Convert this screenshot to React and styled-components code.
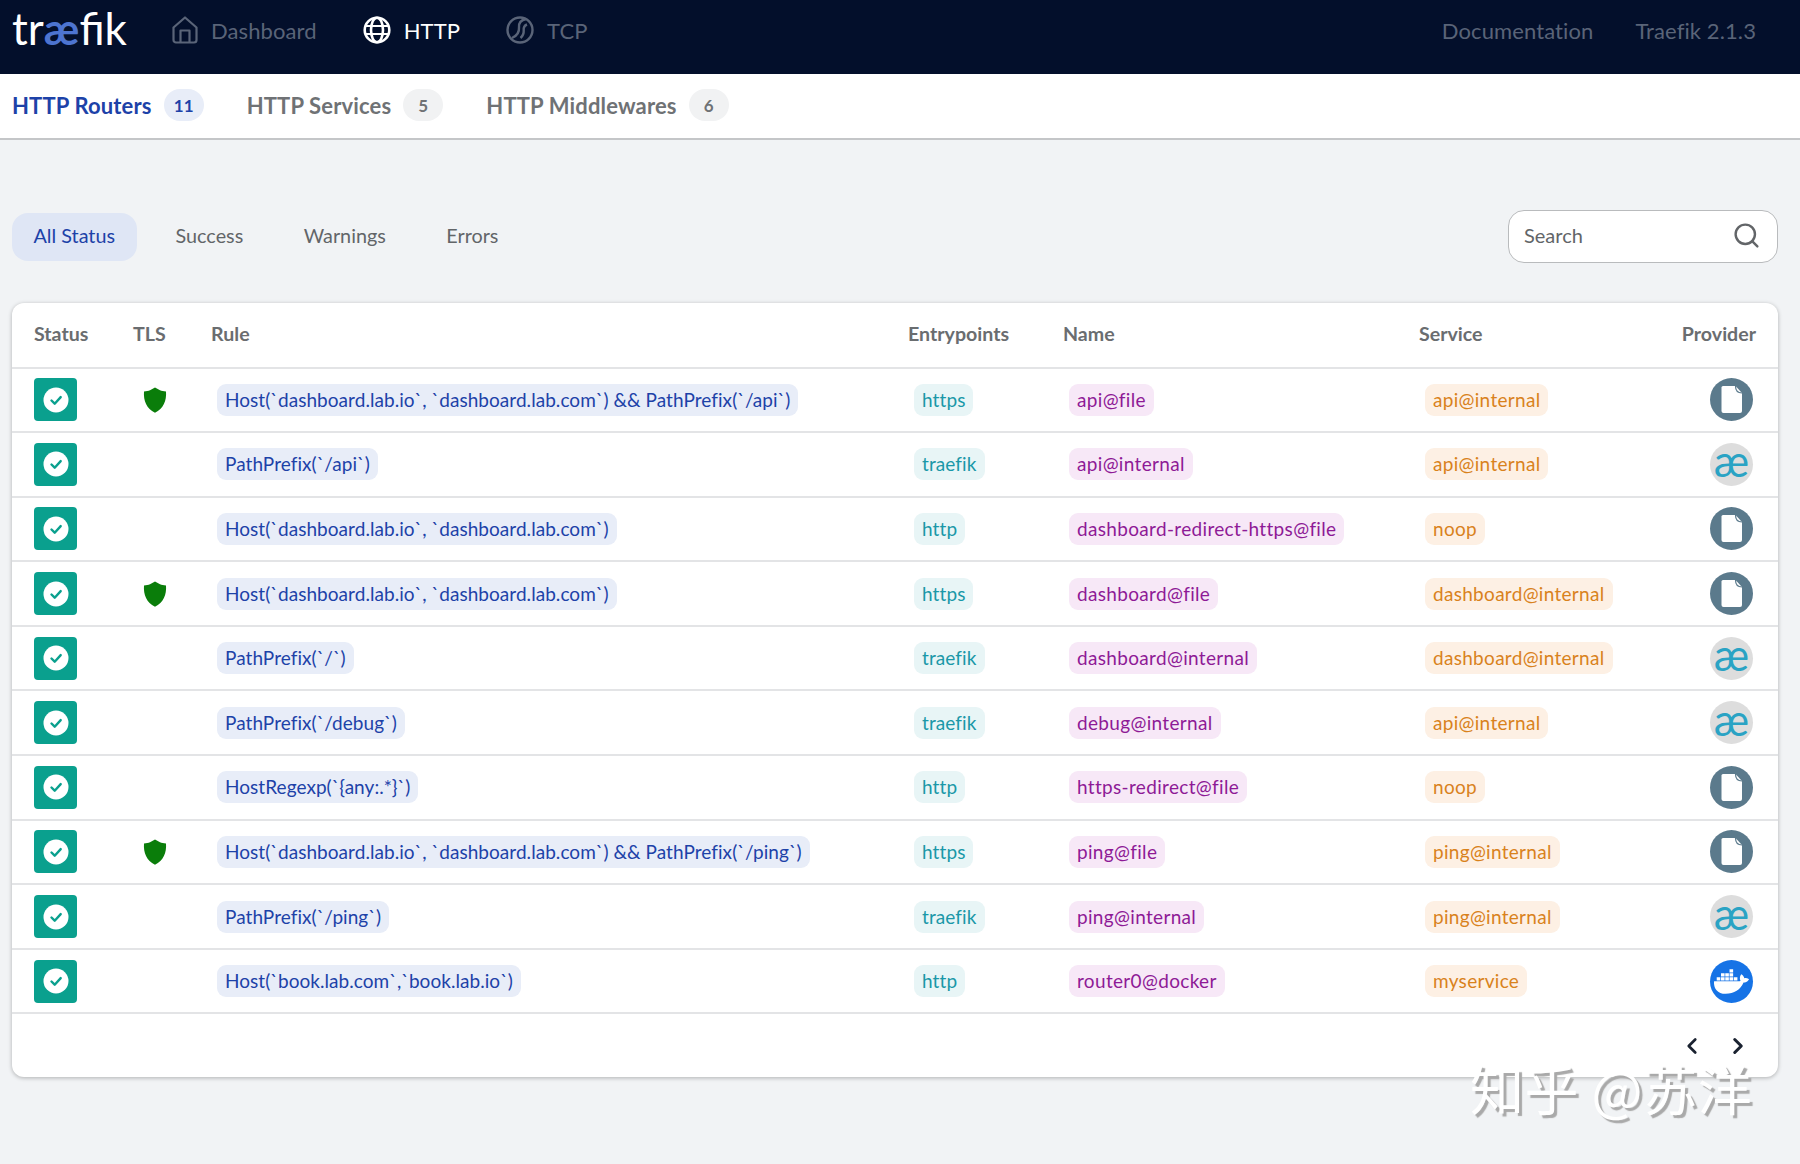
import React from 'react'
import styled, { createGlobalStyle } from 'styled-components'
import { ChevronLeft, ChevronRight, Search } from 'lucide-react'
import { FaDocker } from 'react-icons/fa'

const GlobalStyle = createGlobalStyle`
  html, body {
    margin: 0;
    padding: 0;
    background: #f1f3f5;
    font-family: Lato, "Open Sans", "Liberation Sans", sans-serif;
  }
`;

const Page = styled.div`
  position: relative;
  width: 1800px;
  height: 1164px;
  overflow: hidden;
`;

const TopBar = styled.header`
  height: 74px;
  background: #030f2b;
  display: flex;
  align-items: flex-start;
  padding: 8px 44px 0 12px;
  box-sizing: border-box;
`;

const Logo = styled.div`
  width: 114px;
  margin-right: 46px;
  margin-top: -2px;
  font-size: 44px;
  line-height: 44px;
  font-weight: 400;
  color: #fff;
  white-space: nowrap;
  span { color: #4d74d0; font-weight: 700; }
`;

const NavItem = styled.div`
  display: flex;
  align-items: center;
  gap: 13px;
  height: 44px;
  font-size: 22px;
  letter-spacing: 0.1px;
  margin-right: ${p => p.$gap || 0}px;
  color: ${p => (p.$active ? '#ffffff' : '#5a6478')};
`;

const NavSpacer = styled.div`
  flex: 1;
`;

const SubTabs = styled.nav`
  height: 66px;
  background: #fff;
  border-bottom: 2px solid #c4c6c8;
  box-sizing: border-box;
  display: flex;
  align-items: center;
  padding: 0 0 2px 12px;
`;

const SubTab = styled.div`
  display: flex;
  align-items: center;
  gap: 12px;
  font-size: 22px;
  font-weight: 700;
  letter-spacing: 0.15px;
  margin-right: 43px;
  color: ${p => (p.$active ? '#1d42a8' : '#6f7275')};
`;

const Count = styled.span`
  min-width: 40px;
  height: 32px;
  border-radius: 16px;
  font-size: 17px;
  font-weight: 700;
  display: flex;
  align-items: center;
  justify-content: center;
  background: ${p => (p.$active ? '#e8edf8' : '#f1f2f3')};
  color: ${p => (p.$active ? '#1d42a8' : '#6f7275')};
`;

const Toolbar = styled.div`
  display: flex;
  align-items: center;
  justify-content: space-between;
  margin: 70px 22px 0 12px;
  height: 53px;
`;

const Filters = styled.div`
  display: flex;
  align-items: center;
  gap: 17.5px;
`;

const Filter = styled.div`
  height: 48px;
  padding: 0 21.5px 4px;
  box-sizing: border-box;
  border-radius: 16px;
  display: flex;
  align-items: center;
  font-size: 19.8px;
  color: ${p => (p.$active ? '#1d42a8' : '#626568')};
  background: ${p => (p.$active ? '#dfe6f5' : 'transparent')};
`;

const SearchBox = styled.div`
  width: 270px;
  height: 53px;
  box-sizing: border-box;
  padding: 0 16px 3px 15px;
  border: 1.5px solid #b9bbbd;
  border-radius: 16px;
  background: #fff;
  display: flex;
  align-items: center;
  justify-content: space-between;
  font-size: 20px;
  color: #626568;
`;

const Card = styled.section`
  margin: 40px 22px 0 12px;
  background: #fff;
  border-radius: 12px;
  box-shadow: 0 1px 4px rgba(0, 0, 0, 0.28);
`;

const Row = styled.div`
  display: grid;
  grid-template-columns: 99px 78px 697px 155px 356px 1fr 100px;
  align-items: center;
  height: ${p => (p.$head ? 65.5 : 64.6)}px;
  box-sizing: border-box;
  padding: 0 22px ${p => (p.$head ? 2 : 0)}px 22px;
  border-bottom: 2px solid #e3e4e6;
`;

const HeadCell = styled.div`
  font-size: 19.6px;
  font-weight: 700;
  color: #6a6d70;
  text-align: ${p => (p.$right ? 'right' : 'left')};
`;

const StatusBox = styled.div`
  width: 43px;
  height: 43px;
  border-radius: 4px;
  background: #0aa08e;
  display: flex;
  align-items: center;
  justify-content: center;
`;

const TlsCell = styled.div`
  padding-left: 10px;
  height: 26px;
`;

const ChipCell = styled.div`
  padding-left: 6px;
`;

const Chip = styled.span`
  display: inline-block;
  height: 32px;
  line-height: 32px;
  padding: 0 8px;
  border-radius: 9px;
  font-size: 19px;
  white-space: nowrap;
  letter-spacing: ${p => p.$ls}px;
  background: ${p => p.$bg};
  color: ${p => p.$fg};
`;

const ProviderCell = styled.div`
  display: flex;
  justify-content: flex-end;
  padding-right: 3px;
`;

const ProviderBadge = styled.div`
  width: 43px;
  height: 43px;
  border-radius: 50%;
  display: flex;
  align-items: center;
  justify-content: center;
  background: ${p => p.$bg};
`;

const AeGlyph = styled.span`
  font-size: 44px;
  line-height: 44px;
  margin-top: -8px;
  color: #2aa3c4;
`;

const Pager = styled.div`
  height: 63px;
  display: flex;
  align-items: center;
  justify-content: flex-end;
  gap: 20px;
  padding-right: 27px;
  color: #1a2230;
`;

const Watermark = styled.div`
  position: absolute;
  left: 1470px;
  top: 1050px;
  font-family: "Noto Sans CJK SC", sans-serif;
  font-size: 54px;
  line-height: 76px;
  letter-spacing: 0.5px;
  color: #fff;
  white-space: nowrap;
  text-shadow: 3px 3px 1px #a9a9a9;
`;

const rows = [
  { tls: true, rule: 'Host(`dashboard.lab.io`, `dashboard.lab.com`) && PathPrefix(`/api`)', entry: 'https', name: 'api@file', service: 'api@internal', provider: 'file' },
  { rule: 'PathPrefix(`/api`)', entry: 'traefik', name: 'api@internal', service: 'api@internal', provider: 'internal' },
  { rule: 'Host(`dashboard.lab.io`, `dashboard.lab.com`)', entry: 'http', name: 'dashboard-redirect-https@file', service: 'noop', provider: 'file' },
  { tls: true, rule: 'Host(`dashboard.lab.io`, `dashboard.lab.com`)', entry: 'https', name: 'dashboard@file', service: 'dashboard@internal', provider: 'file' },
  { rule: 'PathPrefix(`/`)', entry: 'traefik', name: 'dashboard@internal', service: 'dashboard@internal', provider: 'internal' },
  { rule: 'PathPrefix(`/debug`)', entry: 'traefik', name: 'debug@internal', service: 'api@internal', provider: 'internal' },
  { rule: 'HostRegexp(`{any:.*}`)', entry: 'http', name: 'https-redirect@file', service: 'noop', provider: 'file' },
  { tls: true, rule: 'Host(`dashboard.lab.io`, `dashboard.lab.com`) && PathPrefix(`/ping`)', entry: 'https', name: 'ping@file', service: 'ping@internal', provider: 'file' },
  { rule: 'PathPrefix(`/ping`)', entry: 'traefik', name: 'ping@internal', service: 'ping@internal', provider: 'internal' },
  { rule: 'Host(`book.lab.com`,`book.lab.io`)', entry: 'http', name: 'router0@docker', service: 'myservice', provider: 'docker' },
]

const chipStyles = {
  rule: ['#e8edf8', '#1d42a8', 0.05],
  entry: ['#e8f5f6', '#1a98a8', 0.1],
  name: ['#f7e8f7', '#8e1a96', 0.33],
  service: ['#fdf0e4', '#d9821c', 0.3],
}

const HomeIcon = () => (
  <svg width="26" height="28" viewBox="0 0 26 28" fill="none" stroke="#5a6478" strokeWidth="2.2" strokeLinejoin="round">
    <path d="M13 1.500L24.500 11.500V24a2.500 2.500 0 0 1-2.500 2.500H4A2.500 2.500 0 0 1 1.500 24V11.500z" />
    <path d="M8.500 26V14.500h9V26" />
  </svg>
)

const GlobeIcon = () => (
  <svg width="28" height="28" viewBox="0 0 28 28" fill="none" stroke="#fff" strokeWidth="2.6">
    <circle cx="14" cy="14" r="12.300" />
    <ellipse cx="14" cy="14" rx="6" ry="12.300" />
    <path d="M2.500 10h23M2.500 18h23" strokeWidth="2.200" />
  </svg>
)

const TcpIcon = () => (
  <svg width="28" height="28" viewBox="0 0 28 28" fill="none" stroke="#5a6478" strokeWidth="2.400">
    <circle cx="14" cy="14" r="12.500" />
    <path d="M20 3c-5 1-7.500 3.500-7 8.500.4 4.500-1.500 8-7 10.500" />
    <path d="M21 8.500c-2.800 1-3.600 3-3.300 6 .2 3-.9 5.500-3.200 7.500" />
  </svg>
)

const CheckIcon = () => (
  <svg width="26" height="26" viewBox="0 0 26 26">
    <circle cx="13" cy="13" r="12.500" fill="#fff" />
    <path d="M8.500 13.500l3.200 3.200 6-6.600" fill="none" stroke="#0aa08e" strokeWidth="2.400" strokeLinecap="round" strokeLinejoin="round" />
  </svg>
)

const ShieldIcon = () => (
  <svg width="24" height="26" viewBox="0 0 24 26">
    <path d="M12 0.500l5 2.800c1.600.7 3.600 1 6 1.100.7 9.400-2.600 17-11 21.300C3.600 21.400.3 13.800 1 4.400c2.400-.1 4.400-.4 6-1.100z" fill="#0a7d0a" />
  </svg>
)

const FileIcon = () => (
  <svg width="43" height="43" viewBox="0 0 43 43">
    <circle cx="21.500" cy="21.500" r="21.500" fill="#5b7a8c" />
    <path d="M11.500 9.500A1.500 1.500 0 0 1 13 8h12.500l6.500 7v18a2 2 0 0 1-2 2H13.500a2 2 0 0 1-2-2z" fill="#fff" />
    <path d="M25.500 8c0 5 2 7 6.500 7" fill="none" stroke="#5b7a8c" strokeWidth="1.200" />
  </svg>
)

const Provider = ({ kind }) => {
  if (kind === 'file') return <FileIcon />
  if (kind === 'docker') {
    return (
      <ProviderBadge $bg="#1673e6">
        <FaDocker color="#fff" size={35} />
      </ProviderBadge>
    )
  }
  return (
    <ProviderBadge $bg="#dddddd">
      <AeGlyph>æ</AeGlyph>
    </ProviderBadge>
  )
}

const App = () => {
  return (
    <Page>
      <GlobalStyle />
      <TopBar>
        <Logo>tr<span>æ</span>fik</Logo>
        <NavItem $gap={46}><HomeIcon />Dashboard</NavItem>
        <NavItem $active $gap={46}><GlobeIcon />HTTP</NavItem>
        <NavItem><TcpIcon />TCP</NavItem>
        <NavSpacer />
        <NavItem $gap={42}>Documentation</NavItem>
        <NavItem>Traefik 2.1.3</NavItem>
      </TopBar>
      <SubTabs>
        <SubTab $active>HTTP Routers <Count $active>11</Count></SubTab>
        <SubTab>HTTP Services <Count>5</Count></SubTab>
        <SubTab>HTTP Middlewares <Count>6</Count></SubTab>
      </SubTabs>
      <Toolbar>
        <Filters>
          <Filter $active>All Status</Filter>
          <Filter>Success</Filter>
          <Filter>Warnings</Filter>
          <Filter>Errors</Filter>
        </Filters>
        <SearchBox>
          Search
          <Search size={29} strokeWidth={2} color="#626568" />
        </SearchBox>
      </Toolbar>
      <Card>
        <Row $head>
          <HeadCell>Status</HeadCell>
          <HeadCell>TLS</HeadCell>
          <HeadCell>Rule</HeadCell>
          <HeadCell>Entrypoints</HeadCell>
          <HeadCell>Name</HeadCell>
          <HeadCell>Service</HeadCell>
          <HeadCell $right>Provider</HeadCell>
        </Row>
        {rows.map((r, i) => (
          <Row key={i}>
            <StatusBox><CheckIcon /></StatusBox>
            <TlsCell>{r.tls && <ShieldIcon />}</TlsCell>
            {['rule', 'entry', 'name', 'service'].map(k => (
              <ChipCell key={k}>
                <Chip $bg={chipStyles[k][0]} $fg={chipStyles[k][1]} $ls={chipStyles[k][2]}>{r[k]}</Chip>
              </ChipCell>
            ))}
            <ProviderCell><Provider kind={r.provider} /></ProviderCell>
          </Row>
        ))}
        <Pager>
          <ChevronLeft size={26} strokeWidth={2.500} />
          <ChevronRight size={26} strokeWidth={2.800} />
        </Pager>
      </Card>
      <Watermark>知乎 @苏洋</Watermark>
    </Page>
  )
}

export default App
